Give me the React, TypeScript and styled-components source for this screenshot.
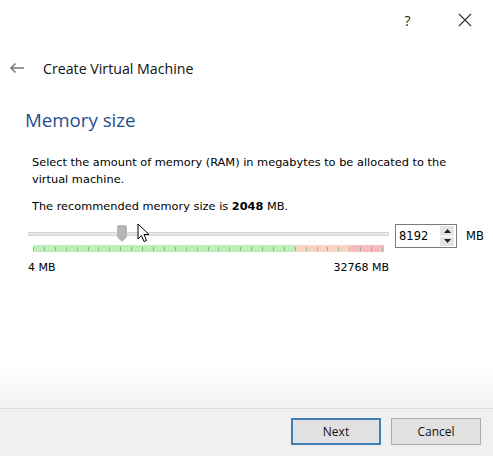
import styled, { createGlobalStyle } from "styled-components";

const GlobalStyle = createGlobalStyle`
  html, body {
    margin: 0;
    padding: 0;
    background: #ffffff;
  }
  * {
    box-sizing: border-box;
  }
`;

const Window = styled.div`
  width: 493px;
  height: 456px;
  display: flex;
  flex-direction: column;
  background: #ffffff;
  position: relative;
  overflow: hidden;
  font-family: "DejaVu Sans", Tahoma, sans-serif;
  color: #000;
`;

const TitleBar = styled.div`
  height: 40px;
  display: flex;
  justify-content: flex-end;
  align-items: center;
`;

const TitleButton = styled.div`
  width: 57px;
  height: 40px;
  display: flex;
  align-items: center;
  justify-content: center;
  font-family: "Open Sans", sans-serif;
  font-size: 14px;
  color: #222;
`;

const Header = styled.div`
  height: 56px;
  display: flex;
  align-items: center;
  padding-left: 9px;
  gap: 18px;
  font-family: "Open Sans", sans-serif;
  font-size: 14.2px;
  color: #111;
`;

const Content = styled.div`
  padding: 11px 0 0 24px;
  flex: 1;
  background: linear-gradient(to bottom, #ffffff 0px, #ffffff 265px, #f3f3f3 312px);
`;

const PageTitle = styled.h1`
  margin: 0 0 22px 1px;
  font-family: "Open Sans", sans-serif;
  font-weight: 400;
  font-size: 18.7px;
  color: #1f4f8f;
`;

const Body = styled.div`
  padding-left: 8px;
  font-size: 11.35px;
`;

const Para = styled.p<{ $gap: number }>`
  margin: 0 0 ${(p) => p.$gap}px 0;
  line-height: 17px;
`;

const SliderRow = styled.div`
  display: flex;
  align-items: flex-start;
  margin-left: -4px;
`;

const SliderCol = styled.div`
  width: 361px;
  display: flex;
  flex-direction: column;
`;

const TrackArea = styled.div`
  position: relative;
  height: 17px;
  display: flex;
  align-items: center;
`;

const Track = styled.div`
  width: 100%;
  height: 4px;
  background: #e7e7e7;
  border: 1px solid #d6d6d6;
`;

const Thumb = styled.div`
  position: absolute;
  left: 89px;
  top: 0;
  width: 10px;
  height: 17px;
  background: #b5b5b5;
  border-radius: 2px 2px 0 0;
  clip-path: polygon(0 0, 100% 0, 100% 70%, 50% 100%, 0 70%);
`;

const Ticks = styled.div`
  margin: 3px 5px 0 5px;
  height: 7px;
  background: linear-gradient(
    to right,
    #bdf0b8 0px,
    #bdf0b8 262px,
    #f9d4c2 262px,
    #f9d4c2 318px,
    #f6bcc0 318px
  );
  position: relative;
`;

const Tick = styled.div`
  position: absolute;
  top: 2px;
  width: 1px;
  height: 4px;
  background: #8fb68c;
`;

const Scale = styled.div`
  display: flex;
  justify-content: space-between;
  margin-top: 9px;
  font-size: 11px;
`;

const SpinBox = styled.div`
  margin-left: 6px;
  margin-top: -1px;
  width: 62px;
  height: 24px;
  border: 1px solid #7a7a7a;
  display: flex;
  align-items: center;
  background: #fff;
  padding: 0 2px 0 3px;
  font-size: 11.5px;
`;

const SpinValue = styled.div`
  flex: 1;
`;

const SpinButtons = styled.div`
  width: 14px;
  height: 20px;
  display: flex;
  flex-direction: column;
  gap: 1px;
`;

const SpinArrow = styled.div`
  flex: 1;
  background: #e4e4e4;
  display: flex;
  align-items: center;
  justify-content: center;
`;

const Unit = styled.div`
  margin-left: 9px;
  margin-top: 4px;
  font-size: 11.5px;
`;

const Footer = styled.div`
  height: 48px;
  border-top: 1px solid #dcdcdc;
  background: #f0f0f0;
  display: flex;
  justify-content: flex-end;
  align-items: flex-start;
  padding: 9px 12px 0 0;
  gap: 10px;
`;

const Button = styled.div<{ $default?: boolean }>`
  width: 90px;
  height: 27px;
  display: flex;
  align-items: center;
  justify-content: center;
  background: #e1e1e1;
  border: ${(p) => (p.$default ? "2px solid #3f7fb5" : "1px solid #adadad")};
  font-family: "Open Sans", sans-serif;
  font-size: 12px;
  color: #111;
`;

const Cursor = styled.svg`
  position: absolute;
  left: 137px;
  top: 223px;
`;

const TICK_COUNT = 33;
const TICK_SPAN = 350;

export default function App() {
  const ticks = Array.from({ length: TICK_COUNT }, (_, i) => Math.round((i * (TICK_SPAN - 1)) / (TICK_COUNT - 1)));

  return (
    <>
      <GlobalStyle />
      <Window>
        <TitleBar>
          <TitleButton>?</TitleButton>
          <TitleButton>
            <svg width="14" height="14" viewBox="0 0 14 14">
              <path d="M1 1 L13 13 M13 1 L1 13" stroke="#333" strokeWidth="1.2" fill="none" />
            </svg>
          </TitleButton>
        </TitleBar>
        <Header>
          <svg width="16" height="12" viewBox="0 0 16 12">
            <path d="M15 6 H2 M6.5 1.5 L2 6 L6.5 10.5" stroke="#7a7a7a" strokeWidth="1.6" fill="none" />
          </svg>
          <span>Create Virtual Machine</span>
        </Header>
        <Content>
          <PageTitle>Memory size</PageTitle>
          <Body>
            <Para $gap={10}>
              Select the amount of memory (RAM) in megabytes to be allocated to the
              <br />
              virtual machine.
            </Para>
            <Para $gap={10}>
              The recommended memory size is <b>2048</b> MB.
            </Para>
            <SliderRow>
              <SliderCol>
                <TrackArea>
                  <Track />
                  <Thumb />
                </TrackArea>
                <Ticks>
                  {ticks.map((x) => (
                    <Tick key={x} style={{ left: x }} />
                  ))}
                </Ticks>
                <Scale>
                  <span>4 MB</span>
                  <span>32768 MB</span>
                </Scale>
              </SliderCol>
              <SpinBox>
                <SpinValue>8192</SpinValue>
                <SpinButtons>
                  <SpinArrow>
                    <svg width="7" height="4" viewBox="0 0 7 4">
                      <path d="M0 4 L3.5 0 L7 4 Z" fill="#222" />
                    </svg>
                  </SpinArrow>
                  <SpinArrow>
                    <svg width="7" height="4" viewBox="0 0 7 4">
                      <path d="M0 0 L3.5 4 L7 0 Z" fill="#222" />
                    </svg>
                  </SpinArrow>
                </SpinButtons>
              </SpinBox>
              <Unit>MB</Unit>
            </SliderRow>
          </Body>
        </Content>
        <Footer>
          <Button $default>Next</Button>
          <Button>Cancel</Button>
        </Footer>
        <Cursor width="13" height="20" viewBox="0 0 13 20">
          <path d="M1 1 L1 16 L4.5 12.5 L7 18.5 L9.5 17.5 L7 11.5 L12 11.5 Z" fill="#fff" stroke="#000" strokeWidth="1" strokeLinejoin="round" />
        </Cursor>
      </Window>
    </>
  );
}
